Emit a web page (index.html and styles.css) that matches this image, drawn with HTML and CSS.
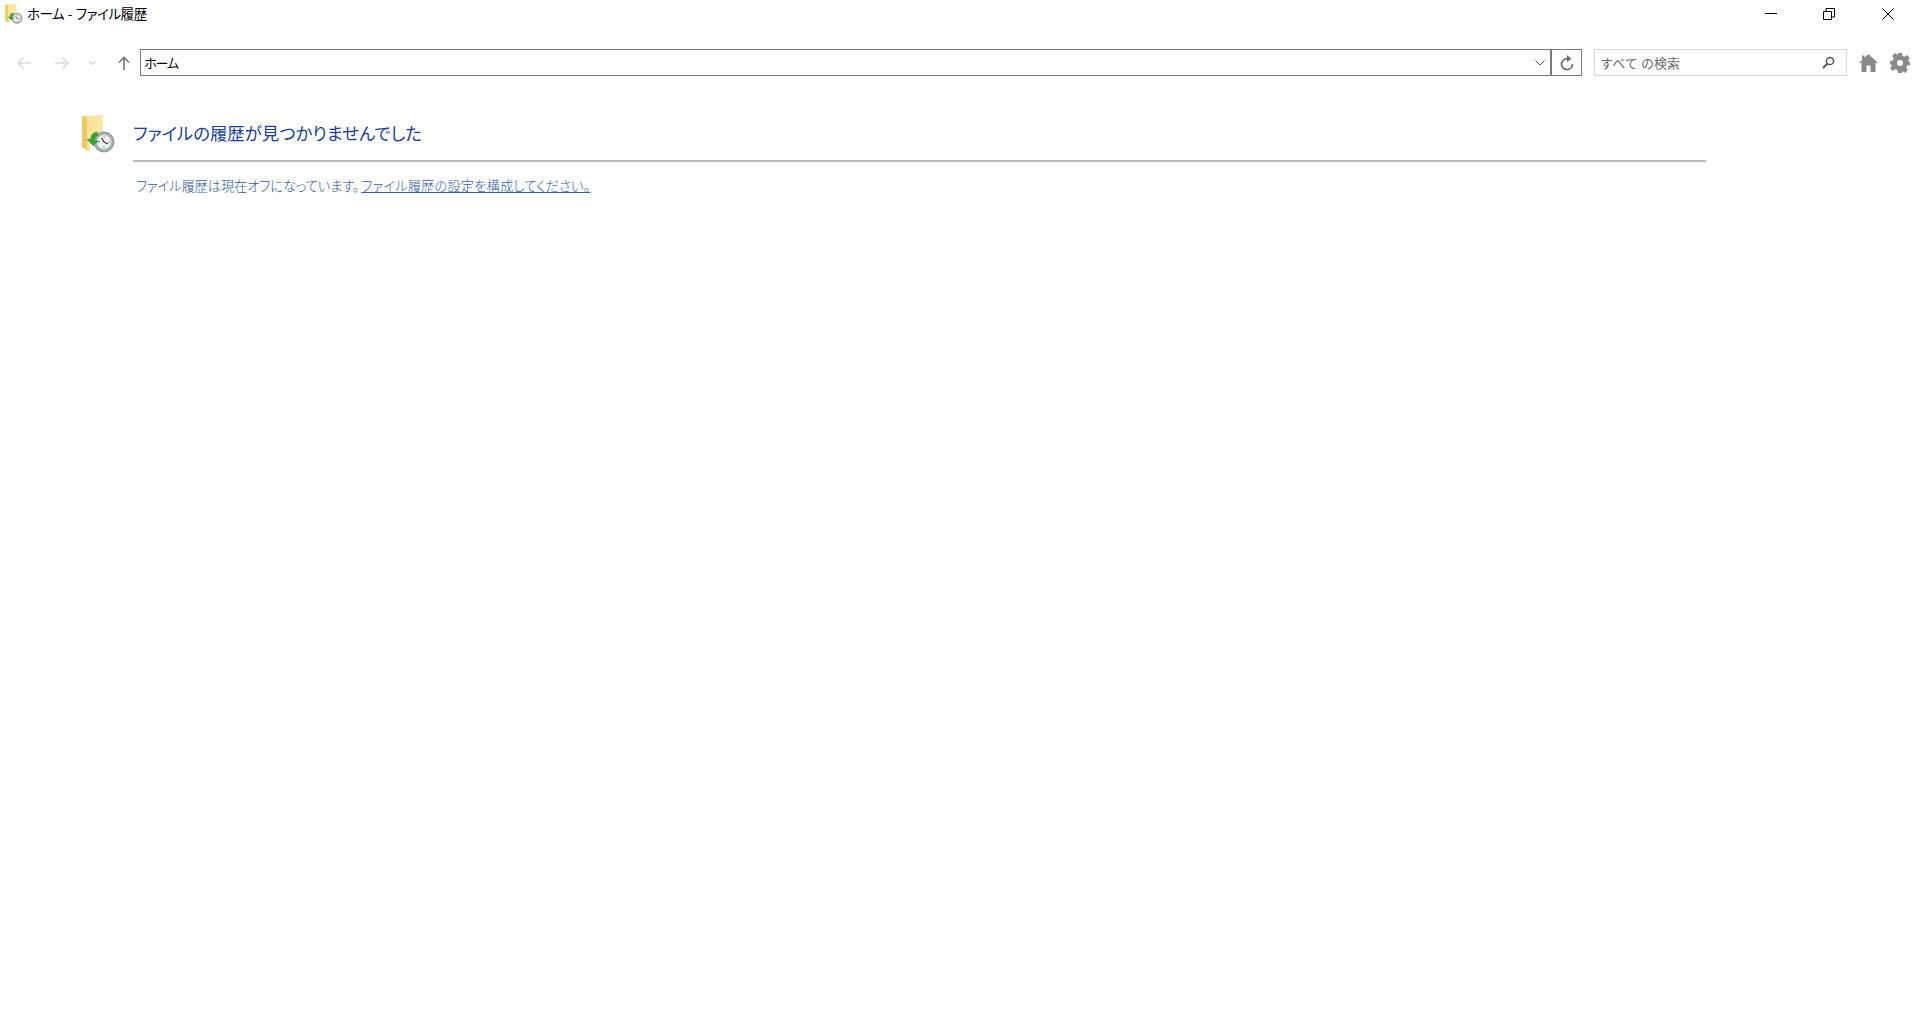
FILE: index.html
```html
<!DOCTYPE html>
<html lang="ja">
<head>
<meta charset="utf-8">
<title>ホーム - ファイル履歴</title>
<link rel="stylesheet" href="styles.css">
</head>
<body>
<svg class="defs" width="0" height="0" aria-hidden="true">
  <defs>
    <linearGradient id="fold" x1="0" y1="0" x2="1" y2="0">
      <stop offset="0" stop-color="#f0d276"/><stop offset="0.35" stop-color="#fae39a"/><stop offset="1" stop-color="#fce9a8"/>
    </linearGradient>
    <symbol id="history" viewBox="0 0 33 38">
      <path d="M0 1 L21 0 V28 H8 V37 L0 32 Z" fill="url(#fold)"/>
      <path d="M0 1 L5 4 V35 L0 32 Z" fill="#edc968"/>
      <circle cx="22" cy="27" r="10" fill="#a8abac" stroke="#8f9394" stroke-width="1"/>
      <circle cx="22" cy="27" r="7.2" fill="#f0f0f0" stroke="#c9cbcc" stroke-width="1"/>
      <path d="M22 21.500V23M22 31V32.500M16.500 27H18M26 27H27.500" stroke="#777" stroke-width="1" fill="none"/>
      <path d="M22 27 L19.500 23 M22 27 L26 29" stroke="#333" stroke-width="1.200" fill="none"/>
      <path d="M15 16.5 C10 17.5 8.5 21 8.5 24 L4.5 24 L11 31 L17 26 L13 25 C13 22.5 14 21 16.5 20.5 Z" fill="#3aa535"/>
    </symbol>
  </defs>
</svg>
<div class="window">
  <header class="titlebar">
    <svg class="app-icon" width="18" height="20"><use href="#history"/></svg>
    <span class="title">ホーム - ファイル履歴</span>
    <div class="controls">
      <button class="ctl"><svg width="12" height="12" viewBox="0 0 12 12"><path d="M0 5.5H12" stroke="#000" fill="none"/></svg></button>
      <button class="ctl"><svg width="12" height="12" viewBox="0 0 12 12"><path d="M.5 3.5H8.5V11.5H.5ZM3 3.5V.5H11.5V9H8.5" stroke="#000" fill="none"/></svg></button>
      <button class="ctl"><svg width="12" height="12" viewBox="0 0 12 12"><path d="M.5 .5L11.5 11.5M11.5 .5L.5 11.5" stroke="#000" fill="none"/></svg></button>
    </div>
  </header>
  <nav class="toolbar">
    <div class="navs">
      <svg class="nav-back" width="16" height="14" viewBox="0 0 16 14"><path d="M15 7H2M7.500 1.500L2 7L7.500 12.500" stroke="#dadada" stroke-width="1.600" fill="none"/></svg>
      <svg class="nav-forward" width="16" height="14" viewBox="0 0 16 14"><path d="M1 7H14M8.500 1.500L14 7L8.500 12.500" stroke="#dadada" stroke-width="1.600" fill="none"/></svg>
      <svg class="nav-recent" width="9" height="6" viewBox="0 0 9 6"><path d="M1 1L4.500 4.500L8 1" stroke="#d4d4d4" stroke-width="1.300" fill="none"/></svg>
      <svg class="nav-up" width="12" height="14" viewBox="0 0 12 14"><path d="M6 14V1.500M1 6.500L6 1.500L11 6.500" stroke="#7a7a7a" stroke-width="1.700" fill="none"/></svg>
    </div>
    <div class="address">
      <span class="address-text">ホーム</span>
      <svg class="chev" width="10" height="6" viewBox="0 0 10 6"><path d="M.5 .5L5 5L9.500 .5" stroke="#555" fill="none"/></svg>
      <div class="refresh">
        <svg width="14" height="16" viewBox="0 0 14 16"><path d="M7.500 3.700A5.500 5.500 0 1 0 12.500 9" stroke="#6f6f6f" stroke-width="1.700" fill="none"/><path d="M7 0L11.500 3.700L7 7.200Z" fill="#6f6f6f"/></svg>
      </div>
    </div>
    <div class="search">
      <span class="search-text">すべて の検索</span>
      <svg width="13" height="13" viewBox="0 0 13 13"><circle cx="8" cy="5" r="3.600" stroke="#555" stroke-width="1.500" fill="none"/><path d="M5.500 7.500L1 12" stroke="#555" stroke-width="2" fill="none"/></svg>
    </div>
    <svg class="home" width="19" height="18" viewBox="0 0 19 18"><path d="M9.500 0L19 9H16.500V18H11.500V11.500H7.500V18H2.500V9H0L3 6.200V1.500H5.500V3.800Z" fill="#8a8a8a"/></svg>
    <svg class="gear" width="20" height="20" viewBox="0 0 20 20"><path fill-rule="evenodd" fill="#8a8a8a" d="M8 0H12L12.500 2.900L14.600 3.800L17 2.100L19.800 4.900L18.100 7.300L19 9.400L20 8V12L17.100 12.600L16.200 14.700L17.900 17.100L15.100 19.900L12.700 18.200L12 18.500V20H8L7.400 17.100L5.300 16.200L2.900 17.900L.1 15.100L1.800 12.700L.9 10.600L0 12V8L2.900 7.400L3.800 5.300L2.100 2.900L4.900 .1L7.300 1.800L7.500 1.700ZM10 7A3 3 0 1 0 10 13A3 3 0 1 0 10 7Z"/></svg>
  </nav>
  <main class="content">
    <svg class="big-icon" width="33" height="38"><use href="#history"/></svg>
    <div class="body">
      <h1 class="heading">ファイルの履歴が見つかりませんでした</h1>
      <p class="message">ファイル履歴は現在オフになっています。<a href="#" class="link">ファイル履歴の設定を構成してください。</a></p>
    </div>
  </main>
</div>
</body>
</html>
```
FILE: styles.css
```css
* { box-sizing: border-box; }
html, body { margin: 0; height: 100%; background: #fff; overflow: hidden; }
body { font-family: "Noto Sans CJK JP", "Noto Sans", sans-serif; color: #000; }
.defs { position: absolute; }
.window { display: flex; flex-direction: column; height: 100%; }

.titlebar { display: flex; align-items: center; height: 28px; padding-left: 5px; flex: none; }
.app-icon { flex: none; }
.title { margin-left: 4px; font-size: 13.500px; line-height: 19px; font-feature-settings: "palt"; letter-spacing: -0.45px; word-spacing: 1px; margin-bottom: 1px; }
.controls { display: flex; margin-left: auto; padding-right: 3px; }
.ctl { width: 58.5px; height: 28px; border: 0; background: none; padding: 0; display: flex; align-items: center; justify-content: center; }

.toolbar { display: flex; align-items: center; height: 27px; margin-top: 21px; flex: none; }
.navs { display: flex; align-items: center; width: 140px; flex: none; padding-left: 16px; }
.nav-forward { margin-left: 22px; }
.nav-recent { margin-left: 18px; }
.nav-up { margin-left: 21px; }

.address { display: flex; align-items: center; width: 1442px; height: 27px; border: 1px solid #7a7a7a; flex: none; padding-left: 3px; }
.address-text { font-size: 13px; letter-spacing: -1.6px; flex: 1; }
.chev { margin-right: 5px; }
.refresh { width: 31px; height: 25px; border-left: 2px solid #7a7a7a; display: flex; align-items: center; justify-content: center; }

.search { display: flex; align-items: center; justify-content: space-between; width: 253px; height: 27px; margin-left: 12px; border: 1px solid #d9d9d9; padding: 0 11px 0 5px; flex: none; }
.search-text { font-size: 13px; color: #6d6d6d; letter-spacing: 0.1px; }
.home { margin-left: 12px; flex: none; }
.gear { margin-left: 12px; flex: none; }

.content { display: flex; padding: 39px 0 0 82px; }
.big-icon { flex: none; }
.body { margin-left: 18px; width: 1573px; }
.heading { margin: 0; height: 47px; padding-top: 5px; border-bottom: 2px solid #bbbbbb; font-size: 17.400px; line-height: 26px; font-weight: 400; color: #1a3fa0; font-feature-settings: "palt"; }
.message { margin: 15px 0 0 3px; font-size: 13.300px; line-height: 18px; font-weight: 300; letter-spacing: -0.15px; color: #2f5aa8; font-feature-settings: "palt"; }
.link { color: #2f5fb0; text-decoration: underline; margin-left: 2px; letter-spacing: 0.1px; }
```
